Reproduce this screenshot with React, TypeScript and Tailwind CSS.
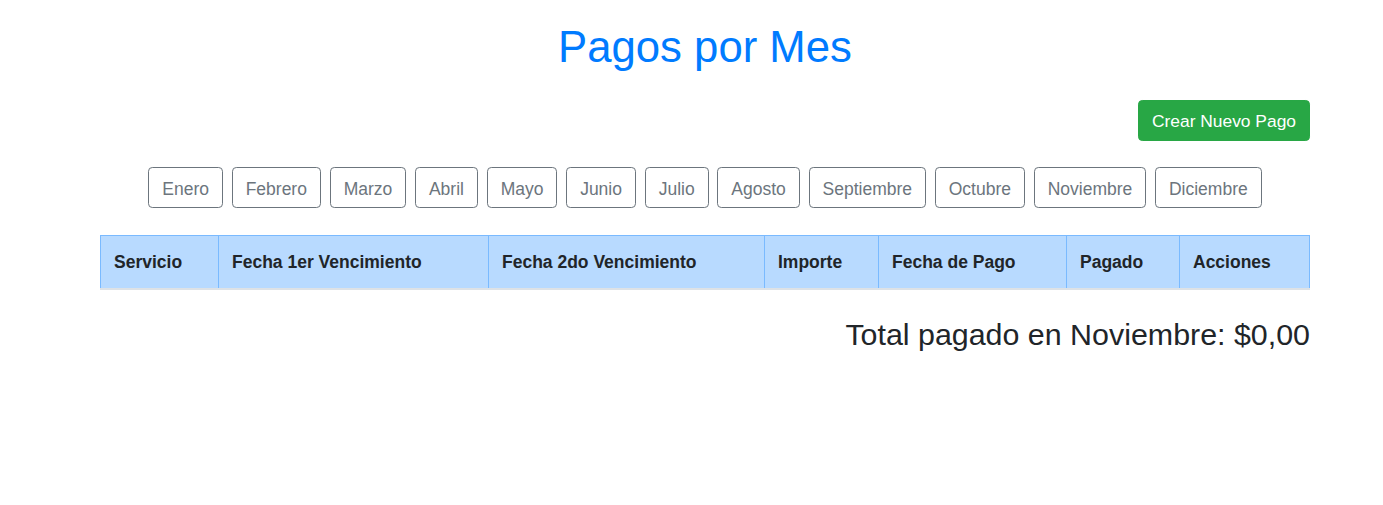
const months = [
  'Enero',
  'Febrero',
  'Marzo',
  'Abril',
  'Mayo',
  'Junio',
  'Julio',
  'Agosto',
  'Septiembre',
  'Octubre',
  'Noviembre',
  'Diciembre',
]

const columns = [
  { label: 'Servicio', w: 'w-[118px]' },
  { label: 'Fecha 1er Vencimiento', w: 'w-[270px]' },
  { label: 'Fecha 2do Vencimiento', w: 'w-[276px]' },
  { label: 'Importe', w: 'w-[114px]' },
  { label: 'Fecha de Pago', w: 'w-[188px]' },
  { label: 'Pagado', w: 'w-[113px]' },
  { label: 'Acciones', w: 'w-[131px] border-r' },
]

export default function App() {
  return (
    <div className="min-h-[505px] bg-white font-['Liberation_Sans',Arial,sans-serif] text-[#212529]">
      <div className="ml-[100px] w-[1210px] pt-[21px]">
        <h1 className="text-center text-[43.7px] leading-[52px] text-[#007bff]">Pagos por Mes</h1>

        <div className="mt-[27px] flex justify-end">
          <button className="rounded-[4.3px] border border-[#28a745] bg-[#28a745] py-[6.5px] px-[13px] text-[17.4px] leading-[26px] text-white">
            Crear Nuevo Pago
          </button>
        </div>

        <div className="mt-[26px] flex justify-center gap-[8.7px]">
          {months.map((m) => (
            <button
              key={m}
              className="rounded-[4.3px] border border-[#6c757d] bg-white pt-[7.5px] pb-[5.5px] px-[13px] text-[17.5px] leading-[26px] text-[#6c757d]"
            >
              {m}
            </button>
          ))}
        </div>

        <div className="mt-[27px] flex border-t border-b-2 border-t-[#7abaff] border-b-[#dee2e6] bg-[#b8daff]">
          {columns.map((c) => (
            <div
              key={c.label}
              className={`${c.w} border-l border-[#7abaff] px-[13px] py-[13px] text-[17.5px] font-bold leading-[26px]`}
            >
              {c.label}
            </div>
          ))}
        </div>

        <h3 className="mt-[26px] text-right text-[30.4px] leading-[36px]">Total pagado en Noviembre: $0,00</h3>
      </div>
    </div>
  )
}
